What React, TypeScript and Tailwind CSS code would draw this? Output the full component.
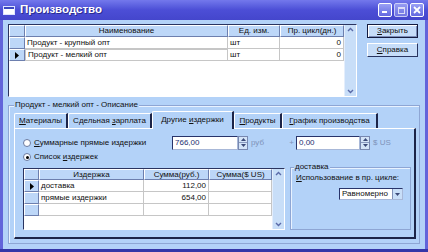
import React from 'react'

const Acc = ({ c }: { c: string }) => <span className="underline underline-offset-[1px]">{c}</span>

function Chevron({ down }: { down?: boolean }) {
  return (
    <svg width="7" height="5" viewBox="0 0 7 5">
      <path d={down ? 'M1 1 L3.5 3.5 L6 1' : 'M1 4 L3.5 1.5 L6 4'} fill="none" stroke="#5a6aa8" strokeWidth="1.4" />
    </svg>
  )
}

function ScrollBar() {
  return (
    <div className="w-[13px] h-full bg-[#c8def8] border-l border-[#e4eefc] flex flex-col justify-between items-center py-[2px]">
      <Chevron />
      <Chevron down />
    </div>
  )
}

function Arrow({ down }: { down?: boolean }) {
  return (
    <svg width="5" height="3" viewBox="0 0 5 3">
      <path d={down ? 'M0 0 L5 0 L2.5 3Z' : 'M0 3 L5 3 L2.5 0Z'} fill="#3c4a78" />
    </svg>
  )
}

function Spin() {
  return (
    <div className="w-[10px] h-[14px] flex flex-col border border-[#7888b0] bg-[#d4e4f8]">
      <div className="flex-1 flex items-center justify-center border-b border-[#8a9ac0]">
        <Arrow />
      </div>
      <div className="flex-1 flex items-center justify-center">
        <Arrow down />
      </div>
    </div>
  )
}

function Radio({ on }: { on?: boolean }) {
  return (
    <span className="w-[8px] h-[8px] rounded-full bg-white border border-[#6a7aa0] flex items-center justify-center shrink-0">
      {on && <span className="w-[3px] h-[3px] rounded-full bg-black" />}
    </span>
  )
}

const hdr =
  'h-full flex items-center justify-center bg-[#bdd7f8] border-t border-l border-t-white border-l-white border-r border-b border-r-[#6d7fae] border-b-[#6d7fae] whitespace-nowrap'
const ind = 'h-full flex items-center justify-center bg-[#bdd7f8] border-t border-l border-t-white border-l-white border-r border-b border-r-[#6d7fae] border-b-[#6d7fae]'
const cell = 'h-full flex items-center px-[2px] bg-white border-r border-b border-[#c6c6c6] whitespace-nowrap'

function Pointer() {
  return (
    <svg width="4" height="7" viewBox="0 0 4 7">
      <path d="M0 0 L4 3.5 L0 7Z" fill="#000" />
    </svg>
  )
}

function TopGrid() {
  const rows = [
    { name: 'Продукт - крупный опт', unit: 'шт', cyc: '0', cur: false },
    { name: 'Продукт - мелкий опт', unit: 'шт', cyc: '0', cur: true },
  ]
  return (
    <div className="w-[349px] h-[73px] flex bg-white border-t border-l border-[#2a3460] border-r border-b border-r-white border-b-white">
      <div className="flex-1 flex flex-col">
        <div className="h-[12px] flex">
          <div className={`${ind} w-[16px]`} />
          <div className={`${hdr} w-[203px]`}>Наименование</div>
          <div className={`${hdr} w-[52px]`}>Ед. изм.</div>
          <div className={`${hdr} w-[64px]`}>Пр. цикл(дн.)</div>
        </div>
        {rows.map((r) => (
          <div key={r.name} className="h-[12px] flex">
            <div className={`${ind} w-[16px]`}>{r.cur && <Pointer />}</div>
            <div className={r.cur ? `${cell} w-[203px] border border-[#2a3460]` : `${cell} w-[203px]`}>{r.name}</div>
            <div className={`${cell} w-[52px]`}>{r.unit}</div>
            <div className={`${cell} w-[64px] justify-end`}>{r.cyc}</div>
          </div>
        ))}
      </div>
      <ScrollBar />
    </div>
  )
}

function BottomGrid() {
  const rows = [
    { name: 'доставка', rub: '112,00', cur: true },
    { name: 'прямые издержки', rub: '654,00', cur: false },
    { name: '', rub: '', cur: false },
  ]
  return (
    <div className="w-[262px] h-[62px] mt-[3px] flex bg-white border-t border-l border-[#2a3460] border-r border-b border-r-white border-b-white">
      <div className="flex-1 flex flex-col">
        <div className="h-[11px] flex">
          <div className={`${ind} w-[15px]`} />
          <div className={`${hdr} w-[105px]`}>Издержка</div>
          <div className={`${hdr} w-[65px]`}>Сумма(руб.)</div>
          <div className={`${hdr} w-[63px]`}>Сумма($ US)</div>
        </div>
        {rows.map((r, i) => (
          <div key={i} className="h-[12px] flex">
            <div className={`${ind} w-[15px]`}>{r.cur && <Pointer />}</div>
            <div className={`${cell} w-[105px]`}>{r.name}</div>
            <div className={`${cell} w-[65px] justify-end`}>{r.rub}</div>
            <div className={`${cell} w-[63px]`} />
          </div>
        ))}
      </div>
      <ScrollBar />
    </div>
  )
}

function TitleBar() {
  return (
    <div className="h-[20px] flex items-center bg-gradient-to-b from-[#7478ec] via-[#4c4ed6] to-[#4446cc] pl-[3px] pr-[3px]">
      <div className="w-[12px] h-[9px] bg-white border border-[#dfe4ff] flex flex-col">
        <div className="h-[2px] bg-[#3a46c0]" />
      </div>
      <span className="ml-[5px] text-white font-bold text-[11.5px] [text-shadow:1px_1px_0_#2a2c90]">Производство</span>
      <div className="ml-auto mr-[1px] flex gap-[2px]">
        <div className="w-[14px] h-[14px] rounded-[2px] border border-white bg-gradient-to-b from-[#9aa0f4] to-[#6468e0] flex items-end pl-[3px] pb-[3px]">
          <div className="w-[5px] h-[2px] bg-white" />
        </div>
        <div className="w-[14px] h-[14px] rounded-[2px] border border-[#e8eaff] bg-gradient-to-b from-[#a4aaf6] to-[#7c80e6] flex items-center justify-center opacity-80">
          <div className="w-[7px] h-[7px] border border-white border-t-2" />
        </div>
        <div className="w-[14px] h-[14px] rounded-[2px] border border-white bg-gradient-to-b from-[#9aa0f4] to-[#6468e0] flex items-center justify-center">
          <svg width="8" height="8" viewBox="0 0 8 8">
            <path d="M1 1 L7 7 M7 1 L1 7" stroke="#fff" strokeWidth="1.8" />
          </svg>
        </div>
      </div>
    </div>
  )
}

const tabBase =
  'h-[15px] flex items-center justify-center whitespace-nowrap border-t border-l border-t-white border-l-white border-r-2 border-r-[#1c2448] rounded-tl-[2px]'

export default function App() {
  const tabs = [
    { el: <><Acc c="М" />атериалы</>, w: 'w-[54px]' },
    { el: <>Сдельная <Acc c="з" />арплата</>, w: 'w-[84px]' },
    { el: <>Другие <Acc c="и" />здержки</>, w: 'w-[82px]', active: true },
    { el: <><Acc c="П" />родукты</>, w: 'w-[48px]' },
    { el: <><Acc c="Г" />рафик производства</>, w: 'w-[96px]' },
  ]
  return (
    <div className="w-[428px] h-[252px] overflow-hidden bg-[#6264da] border-b-[3px] border-[#3436a8] font-['Liberation_Sans',Arial,sans-serif] text-[8px] leading-none text-[#101010] flex flex-col">
      <TitleBar />
      <div className="flex-1 mx-[3px] bg-[#b3d2f8] flex flex-col">
        {/* top: product list + buttons */}
        <div className="flex pt-[4px] pl-[5px]">
          <TopGrid />
          <div className="ml-[10px] w-[51px] flex flex-col gap-[5px]">
            <div className="h-[14px] flex items-center justify-center bg-[#c6ddf9] border border-[#141c40] shadow-[inset_1px_1px_0_#fff,inset_-1px_-1px_0_#7a8cb8]">
              <span><Acc c="З" />акрыть</span>
            </div>
            <div className="h-[14px] flex items-center justify-center bg-[#c6ddf9] border border-t-white border-l-white border-r-[#283460] border-b-[#283460]">
              <span><Acc c="С" />правка</span>
            </div>
          </div>
        </div>

        {/* description group */}
        <div className="relative mt-[8px] ml-[5px] w-[412px] h-[139px] border border-[#8ea6d4] shadow-[inset_1px_1px_0_#e8f2ff] pl-[5px] pt-[4px]">
          <span className="absolute -top-[5px] left-[5px] bg-[#b3d2f8] px-[1px]">Продукт - мелкий опт - Описание</span>
          <div className="flex items-end h-[18px]">
            {tabs.map((t, i) =>
              t.active ? (
                <div key={i} className={`${t.w} h-[18px] -mb-[1px] relative z-10 bg-[#b3d2f8] flex items-center justify-center whitespace-nowrap border-t border-l border-t-white border-l-white border-r-2 border-r-[#1c2448] rounded-tl-[2px] pb-[2px]`}>
                  <span>{t.el}</span>
                </div>
              ) : (
                <div key={i} className={`${t.w} ${tabBase}`}>
                  <span>{t.el}</span>
                </div>
              )
            )}
          </div>
          {/* tab panel */}
          <div className="w-[402px] h-[111px] border-t border-l border-t-white border-l-white border-r-2 border-b-2 border-r-[#1c2448] border-b-[#1c2448] flex flex-col pl-[8px]">
            <div className="flex items-center mt-[6px] h-[15px]">
              <div className="w-[149px] flex items-center gap-[3px]">
                <Radio />
                <span><Acc c="С" />уммарные прямые издержки</span>
              </div>
              <div className="w-[66px] h-[14px] bg-white border border-t-[#28346a] border-l-[#28346a] border-r-[#a8b8d8] border-b-[#a8b8d8] flex items-center pl-[2px] text-[#243070]">766,00</div>
              <Spin />
              <span className="ml-[3px] w-[36px] text-[#7f93b8]">руб</span>
              <span className="w-[9px] text-center text-[#7f93b8]">+</span>
              <div className="w-[64px] h-[14px] bg-white border border-t-[#28346a] border-l-[#28346a] border-r-[#a8b8d8] border-b-[#a8b8d8] flex items-center pl-[2px] text-[#243070]">0,00</div>
              <Spin />
              <span className="ml-[3px] text-[#7f93b8]">$ US</span>
            </div>
            <div className="flex items-center gap-[3px] h-[12px] mt-[1px]">
              <Radio on />
              <span>Список <Acc c="и" />здержек</span>
            </div>
            <div className="flex items-start mt-[2px]">
              <BottomGrid />
              <div className="relative ml-[5px] mt-[2px] w-[121px] h-[63px] border border-[#8ea6d4] shadow-[inset_1px_1px_0_#e8f2ff] flex flex-col pl-[5px] pr-[7px] pt-[5px]">
                <span className="absolute -top-[5px] left-[3px] bg-[#b3d2f8] px-[1px]">доставка</span>
                <span className="h-[9px] flex items-center"><Acc c="И" />спользование в пр. цикле:</span>
                <div className="self-end mt-[6px] w-[64px] h-[12px] bg-white border border-t-[#28346a] border-l-[#28346a] border-r-[#a8b8d8] border-b-[#a8b8d8] flex items-center">
                  <span className="flex-1 pl-[2px]">Равномерно</span>
                  <div className="w-[10px] h-full bg-[#c8def8] border-l border-[#8090b8] flex items-center justify-center">
                    <Arrow down />
                  </div>
                </div>
              </div>
            </div>
          </div>
        </div>
      </div>
    </div>
  )
}
